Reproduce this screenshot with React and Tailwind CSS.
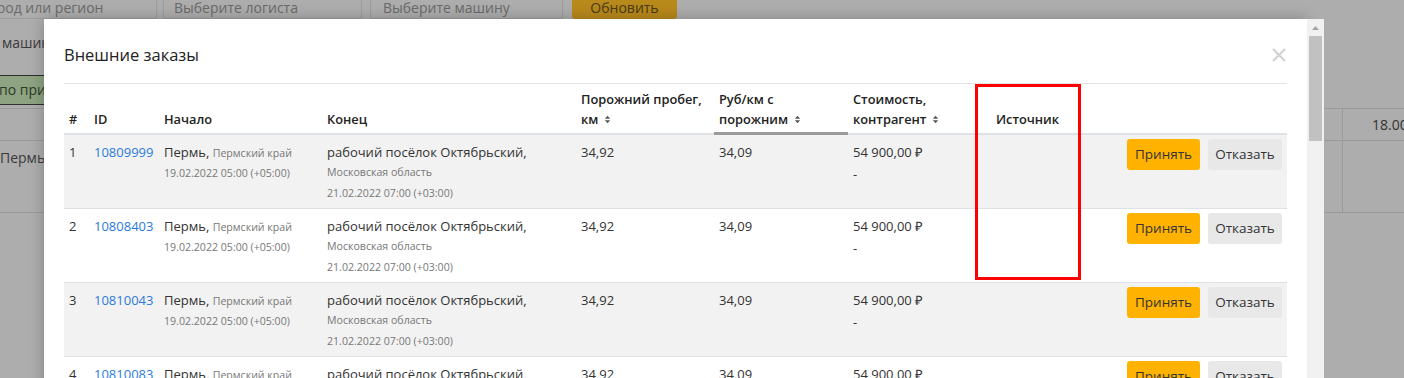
import React from 'react';

const rows = [
  { n: 1, id: '10809999' },
  { n: 2, id: '10808403' },
  { n: 3, id: '10810043' },
  { n: 4, id: '10810083' },
];

const SortIcon = () => (
  <svg width="7" height="9" viewBox="0 0 7 9" className="inline-block ml-[6px] align-[0px]">
    <path d="M3.5 0.8 L6.2 3.8 L0.8 3.8 Z" fill="#555" />
    <path d="M3.5 8.2 L6.2 5.2 L0.8 5.2 Z" fill="#555" />
  </svg>
);

const OrderRow = ({ row }) => {
  const striped = row.n % 2 === 1;
  return (
    <tr className={`${striped ? 'bg-[#f2f2f2]' : 'bg-white'} h-[74px] border-b border-[#dee2e6] align-top`}>
      <td className="pl-[5px] pt-[7px] leading-[20px]">{row.n}</td>
      <td className="pl-[5px] pt-[7px] leading-[20px]">
        <a className="text-[#2b7bdc]">{row.id}</a>
      </td>
      <td className="pl-[5px] pt-[7px] leading-[20px]">
        <div>
          Пермь, <span className="text-[10.6px] text-[#777]">Пермский край</span>
        </div>
        <div className="text-[10.6px] text-[#777] leading-[21px]">19.02.2022 05:00 (+05:00)</div>
      </td>
      <td className="pl-[5px] pt-[7px] leading-[20px]">
        <div>рабочий посёлок Октябрьский,</div>
        <div className="text-[10.6px] text-[#777] leading-[21px]">Московская область</div>
        <div className="text-[10.6px] text-[#777] leading-[21px]">21.02.2022 07:00 (+03:00)</div>
      </td>
      <td className="pl-[5px] pt-[7px] leading-[20px]">34,92</td>
      <td className="pl-[5px] pt-[7px] leading-[20px]">34,09</td>
      <td className="pl-[5px] pt-[7px] leading-[20px]">
        <div>54 900,00 ₽</div>
        <div className="leading-[24px]">-</div>
      </td>
      <td></td>
      <td className="pr-[5px] pt-[4px]">
        <div className="flex justify-end gap-[8px]">
          <button className="h-[31px] w-[73px] rounded-[3px] bg-[#ffb300] text-[13.5px] text-[#333]">Принять</button>
          <button className="h-[31px] w-[74px] rounded-[3px] bg-[#e8e8e8] text-[13.5px] text-[#333]">Отказать</button>
        </div>
      </td>
    </tr>
  );
};

export default function App() {
  return (
    <div className="relative w-[1404px] h-[378px] overflow-hidden bg-[#adadad] font-['Open_Sans',sans-serif] text-[14px] text-[#3a3a3a]">
      {/* dimmed page behind the modal */}
      <div className="flex h-[19px] text-[#6a6a6a]">
        <div className="w-[157px] border-r border-b border-[#9c9c9c] rounded-br-[3px] overflow-hidden whitespace-nowrap leading-[16px]">
          <span className="ml-[-19px]">Город или регион</span>
        </div>
        <div className="ml-[6px] w-[199px] border-x border-b border-[#9c9c9c] rounded-b-[3px] pl-[10px] leading-[16px]">Выберите логиста</div>
        <div className="ml-[8px] w-[193px] border-x border-b border-[#9c9c9c] rounded-b-[3px] pl-[12px] leading-[16px]">Выберите машину</div>
        <div className="ml-[9px] w-[105px] bg-[#b8891b] rounded-b-[3px] text-center text-[#4a3a14] leading-[16px]">Обновить</div>
      </div>
      <div className="mt-[15px] leading-[18px] whitespace-nowrap">
        <span className="ml-[-27px]">Тип машины</span>
      </div>
      <div className="mt-[23px] flex">
        <div className="ml-[-6px] h-[30px] w-[90px] border border-[#2e2e2e] rounded-[3px] bg-[#8da381] text-[#2d3a2a] leading-[28px] pl-[4px] whitespace-nowrap overflow-hidden">по прибытию</div>
      </div>
      <div className="mt-[3px] flex h-[33px] border-t border-b border-[#9a9a9a]">
        <div className="flex-1"></div>
        <div className="w-[62px] shrink-0 border-l border-[#9a9a9a] leading-[32px] text-[#333] whitespace-nowrap">
          <span className="ml-[29px]">18.00</span>
        </div>
      </div>
      <div className="flex h-[72px] border-b border-[#9a9a9a]">
        <div className="pt-[7px] leading-[20px] text-[#3a3a3a]">Пермь</div>
        <div className="flex-1"></div>
        <div className="w-[62px] shrink-0 border-l border-[#9a9a9a]"></div>
      </div>

      {/* modal */}
      <div className="absolute left-[44px] top-[19px] w-[1263px] h-[380px] bg-white shadow-[0_0_14px_rgba(0,0,0,0.25)] px-[20px] text-[13px] text-[#333]">
        <div className="flex h-[65px] items-start justify-between border-b border-[#e5e5e5] pt-[24px]">
          <h4 className="text-[16.5px] leading-[24px] text-[#222]">Внешние заказы</h4>
          <svg width="14" height="14" viewBox="0 0 14 14" className="mt-[5px] mr-[1px]">
            <path d="M1 1 L13 13 M13 1 L1 13" stroke="#d2d2d2" strokeWidth="2.2" />
          </svg>
        </div>
        <table className="table-fixed w-[1223px] border-collapse">
          <colgroup>
            <col className="w-[25px]" />
            <col className="w-[70px]" />
            <col className="w-[163px]" />
            <col className="w-[254px]" />
            <col className="w-[138px]" />
            <col className="w-[134px]" />
            <col className="w-[127px]" />
            <col className="w-[105px]" />
            <col className="w-[207px]" />
          </colgroup>
          <thead>
            <tr className="border-b-2 border-[#dee2e6] align-bottom text-left text-[12.8px] font-semibold text-[#222] leading-[20px]">
              <th className="pl-[5px] pt-[5px] pb-[4px] font-semibold">#</th>
              <th className="pl-[5px] pt-[5px] pb-[4px] font-semibold">ID</th>
              <th className="pl-[5px] pt-[5px] pb-[4px] font-semibold">Начало</th>
              <th className="pl-[5px] pt-[5px] pb-[4px] font-semibold">Конец</th>
              <th className="pl-[5px] pt-[5px] pb-[4px] font-semibold">
                Порожний пробег,<br />км<SortIcon />
              </th>
              <th className="relative pl-[5px] pt-[5px] pb-[4px] font-semibold">
                Руб/км с<br />порожним<SortIcon />
                <span className="absolute left-0 right-0 bottom-[-2px] h-[3px] bg-[#9b9b9b]"></span>
              </th>
              <th className="pl-[5px] pt-[5px] pb-[4px] font-semibold">
                Стоимость,<br />контрагент<SortIcon />
              </th>
              <th className="pt-[5px] pb-[4px] text-center font-semibold">Источник</th>
              <th></th>
            </tr>
          </thead>
          <tbody>
            {rows.map((row) => (
              <OrderRow key={row.n} row={row} />
            ))}
          </tbody>
        </table>
        {/* highlight */}
        <div className="absolute left-[931px] top-[65px] w-[106px] h-[196px] border-[3px] border-[#ff0000]"></div>
      </div>

      {/* modal scrollbar */}
      <div className="absolute left-[1307px] top-[19px] w-[17px] h-[360px] bg-[#f1f1f1]">
        <div className="flex justify-center pt-[7px]">
          <svg width="7" height="4" viewBox="0 0 7 4">
            <path d="M3.5 0 L7 4 L0 4 Z" fill="#a3a3a3" />
          </svg>
        </div>
        <div className="mx-[2px] mt-[6px] h-[105px] bg-[#c1c1c1]"></div>
      </div>
    </div>
  );
}
